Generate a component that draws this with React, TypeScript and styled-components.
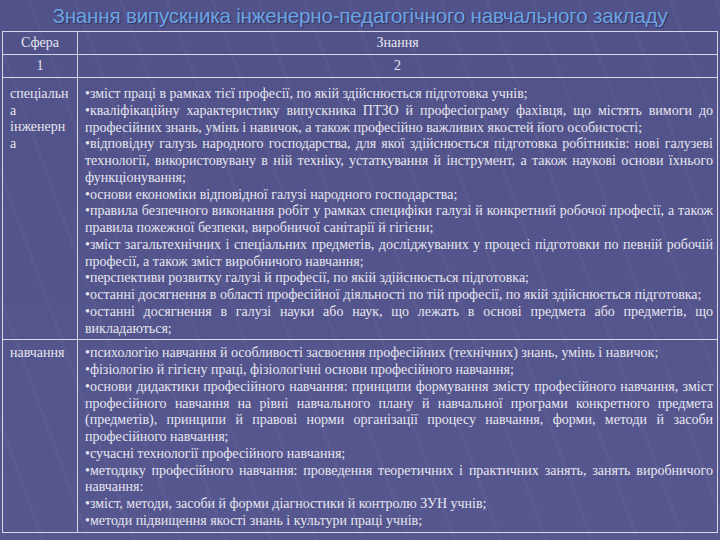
import styled, { createGlobalStyle } from 'styled-components'

const GlobalStyle = createGlobalStyle`
    html, body {
        margin: 0;
        padding: 0;
    }

    body {
        width: 720px;
        height: 540px;
        overflow: hidden;
        background-color: #54548a;
    }
`

const Slide = styled.main`
    width: 720px;
    height: 540px;
    box-sizing: border-box;
    padding: 0 2px;
    background-color: #54548a;
    background-image:
        repeating-linear-gradient(
            70deg,
            rgba(255, 255, 255, 0) 0px,
            rgba(255, 255, 255, 0) 38px,
            rgba(255, 255, 255, 0.035) 40px,
            rgba(255, 255, 255, 0) 43px
        ),
        linear-gradient(180deg, #52528a 0%, #575790 100%);
`

const Title = styled.h1`
    margin: 0;
    height: 31px;
    display: flex;
    align-items: center;
    justify-content: center;
    font-family: 'Liberation Sans', Arial, sans-serif;
    font-weight: normal;
    font-size: 20.6px;
    letter-spacing: -0.2px;
    color: #6aa4e4;
    text-shadow: 1px 1px 1px rgba(30, 30, 70, 0.6);
`

const Table = styled.table`
    width: 716px;
    table-layout: fixed;
    border-collapse: collapse;
    font-family: 'Liberation Serif', 'Times New Roman', serif;
    font-size: 14px;
    color: #e6e6ef;

    td {
        border: 1px solid #d6d6e6;
        vertical-align: top;
    }
`

const SphereCol = styled.col`
    width: 75px;
`

const HeadCell = styled.td`
    height: 22px;
    padding: 0;
    text-align: center;
    vertical-align: middle !important;
`

const SphereCell = styled.td<{ $top: number }>`
    padding: ${(p) => p.$top}px 2px 0 7px;
    line-height: 16.7px;
`

const KnowledgeCell = styled.td<{ $top: number }>`
    padding: ${(p) => p.$top}px 4px 2px 7px;
    line-height: 16.75px;
    text-align: justify;
`

const Item = styled.p`
    margin: 0;
`

const speciality = [
    'зміст праці в рамках тієї професії, по якій здійснюється підготовка учнів;',
    'кваліфікаційну характеристику випускника ПТЗО й професіограму фахівця, що містять вимоги до професійних знань, умінь і навичок, а також професійно важливих якостей його особистості;',
    'відповідну галузь народного господарства, для якої здійснюється підготовка робітників: нові галузеві технології, використовувану в ній техніку, устаткування й інструмент, а також наукові основи їхнього функціонування;',
    'основи економіки відповідної галузі народного господарства;',
    'правила безпечного виконання робіт у рамках специфіки галузі й конкретний робочої професії, а також правила пожежної безпеки, виробничої санітарії й гігієни;',
    'зміст загальтехнічних і спеціальних предметів, досліджуваних у процесі підготовки по певній робочій професії, а також зміст виробничого навчання;',
    'перспективи розвитку галузі й професії, по якій здійснюється підготовка;',
    'останні досягнення в області професійної діяльності по тій професії, по якій здійснюється підготовка;',
    'останні досягнення в галузі науки або наук, що лежать в основі предмета або предметів, що викладаються;',
]

const teaching = [
    'психологію навчання й особливості засвоєння професійних (технічних) знань, умінь і навичок;',
    'фізіологію й гігієну праці, фізіологічні основи професійного навчання;',
    'основи дидактики професійного навчання: принципи формування змісту професійного навчання, зміст професійного навчання на рівні навчального плану й навчальної програми конкретного предмета (предметів), принципи й правові норми організації процесу навчання, форми, методи й засоби професійного навчання;',
    'сучасні технології професійного навчання;',
    'методику професійного навчання: проведення теоретичних і практичних занять, занять виробничого навчання:',
    'зміст, методи, засоби й форми діагностики й контролю ЗУН учнів;',
    'методи підвищення якості знань і культури праці учнів;',
]

export default function App() {
    return (
        <>
            <GlobalStyle />
            <Slide>
                <Title>Знання випускника інженерно-педагогічного навчального закладу</Title>

                <Table>
                    <colgroup>
                        <SphereCol />
                        <col />
                    </colgroup>
                    <tbody>
                        <tr>
                            <HeadCell>Сфера</HeadCell>
                            <HeadCell>Знання</HeadCell>
                        </tr>
                        <tr>
                            <HeadCell>1</HeadCell>
                            <HeadCell>2</HeadCell>
                        </tr>
                        <tr>
                            <SphereCell $top={8}>
                                спеціальн
                                <br />а
                                <br />
                                інженерн
                                <br />а
                            </SphereCell>
                            <KnowledgeCell $top={8}>
                                {speciality.map((text) => (
                                    <Item key={text}>•{text}</Item>
                                ))}
                            </KnowledgeCell>
                        </tr>
                        <tr>
                            <SphereCell $top={5}>навчання</SphereCell>
                            <KnowledgeCell $top={5}>
                                {teaching.map((text) => (
                                    <Item key={text}>•{text}</Item>
                                ))}
                            </KnowledgeCell>
                        </tr>
                    </tbody>
                </Table>
            </Slide>
        </>
    )
}
